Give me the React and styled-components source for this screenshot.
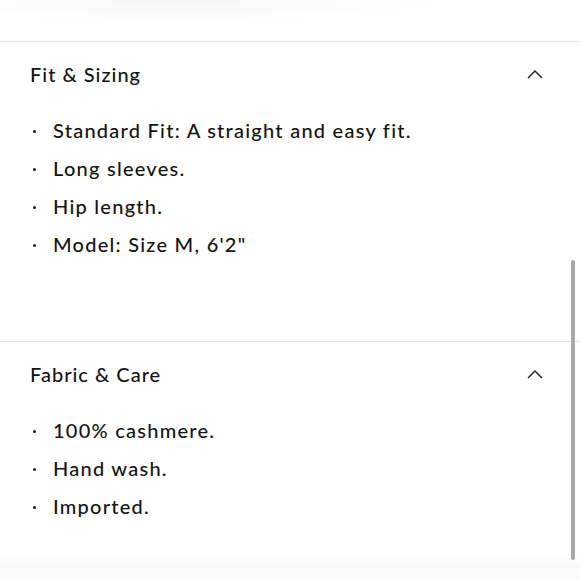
import React from 'react'
import styled, { createGlobalStyle } from 'styled-components'

const sections = [
	{
		title: 'Fit & Sizing',
		items: ['Standard Fit: A straight and easy fit.', 'Long sleeves.', 'Hip length.', 'Model: Size M, 6\'2"'],
		bottom: 78,
	},
	{
		title: 'Fabric & Care',
		items: ['100% cashmere.', 'Hand wash.', 'Imported.'],
		bottom: 40,
	},
]

export default function App() {
	return (
		<>
			<GlobalStyle />
			<Page>
				<TopFade />
				{sections.map((section) => (
					<Section key={section.title} $bottom={section.bottom}>
						<Header>
							<Title>{section.title}</Title>
							<Chevron viewBox='0 0 16 9' aria-hidden='true'>
								<path d='M1 8 L8 1 L15 8' />
							</Chevron>
						</Header>
						<List>
							{section.items.map((item) => (
								<Item key={item}>{item}</Item>
							))}
						</List>
					</Section>
				))}
				<ScrollThumb />
			</Page>
		</>
	)
}

const GlobalStyle = createGlobalStyle`
	html, body {
		margin: 0;
		background: #ffffff;
	}
	body {
		font-family: Lato, 'Noto Sans', sans-serif;
		color: #141414;
	}
`

const Page = styled.div`
	position: relative;
	width: 580px;
	height: 580px;
	overflow: hidden;
	padding-top: 41px;
	box-sizing: border-box;
	background: linear-gradient(to bottom, #ffffff 0, #ffffff 556px, #f9f9f9 566px, #fafafa 580px);
`

const TopFade = styled.div`
	position: absolute;
	top: 0;
	left: 0;
	width: 440px;
	height: 22px;
	background: radial-gradient(ellipse at 40% 0%, #f6f6f6 0%, rgba(255, 255, 255, 0) 70%);
`

const Section = styled.section`
	border-top: 1px solid #e4e4e4;
	padding: 0 30px ${(p) => p.$bottom}px;
`

const Header = styled.div`
	display: flex;
	justify-content: space-between;
	align-items: center;
	height: 64px;
	padding-right: 7px;
`

const Title = styled.h3`
	margin: 0;
	font-size: 20px;
	font-weight: 500;
	letter-spacing: 1px;
`

const Chevron = styled.svg`
	width: 16px;
	height: 9px;
	fill: none;
	stroke: #2b2b2b;
	stroke-width: 1.5;
`

const List = styled.ul`
	list-style: none;
	margin: 5px 0 0;
	padding: 0;
`

const Item = styled.li`
	display: flex;
	align-items: center;
	height: 38px;
	font-size: 20px;
	font-weight: 500;
	letter-spacing: 1.25px;

	&::before {
		content: '';
		width: 3px;
		height: 3px;
		border-radius: 50%;
		background: #1a1a1a;
		margin: 2px 17px 0 3px;
		flex-shrink: 0;
	}
`

const ScrollThumb = styled.div`
	position: absolute;
	right: 5px;
	top: 260px;
	width: 4px;
	height: 300px;
	border-radius: 2px;
	background: #a9a9a9;
`
